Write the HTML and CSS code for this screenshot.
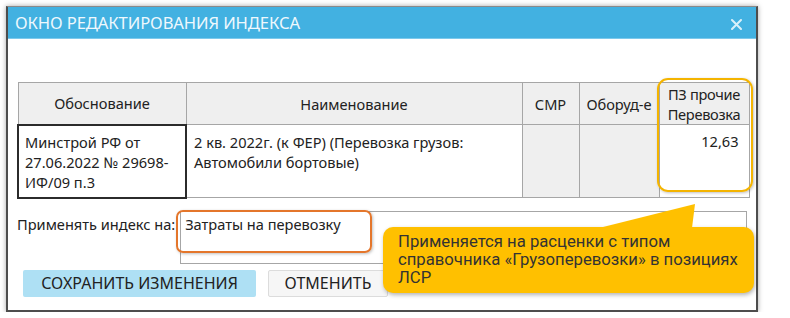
FILE: index.html
```html
<!DOCTYPE html>
<html lang="ru">
<head>
  <meta charset="UTF-8">
  <meta name="viewport" content="width=device-width, initial-scale=1">
  <title>Окно редактирования индекса</title>
  <link rel="stylesheet" href="styles.css">
</head>
<body>
<div class="dialog">
  <div class="dialog-title">
    <div>ОКНО РЕДАКТИРОВАНИЯ ИНДЕКСА</div>
    <div class="close">
      <svg width="11" height="11" viewBox="0 0 11 11">
        <path d="M1 1L10 10M10 1L1 10" stroke="#d9f0fa" stroke-width="2" stroke-linecap="round"/>
      </svg>
    </div>
  </div>
  <div class="dialog-body">
    <table class="index-table">
      <colgroup>
        <col class="col-1">
        <col class="col-2">
        <col class="col-3">
        <col class="col-4">
        <col class="col-5">
      </colgroup>
      <tr>
        <th>Обоснование</th>
        <th>Наименование</th>
        <th>СМР</th>
        <th>Оборуд-е</th>
        <th class="narrow">ПЗ прочие Перевозка</th>
      </tr>
      <tr>
        <td class="selected">Минстрой РФ от 27.06.2022 № 29698-ИФ/09 п.3</td>
        <td>2 кв. 2022г. (к ФЕР) (Перевозка грузов: Автомобили бортовые)</td>
        <td class="readonly"></td>
        <td class="readonly"></td>
        <td class="number">12,63</td>
      </tr>
    </table>
    <div class="apply-row">
      <div class="apply-label">Применять индекс на:</div>
      <div class="apply-input">Затраты на перевозку</div>
    </div>
    <div class="buttons">
      <div class="btn btn-save">СОХРАНИТЬ ИЗМЕНЕНИЯ</div>
      <div class="btn btn-cancel">ОТМЕНИТЬ</div>
    </div>
  </div>

  <div class="mark mark-column"></div>
  <div class="mark mark-input"></div>
  <div class="callout">
    <svg class="callout-tail" width="100" height="24" viewBox="0 0 100 24">
      <path d="M0 24L96 0L93 24Z" fill="#ffc000"/>
    </svg>
    Применяется на расценки с типом справочника «Грузоперевозки» в позициях ЛСР
  </div>
</div>
</body>
</html>
```

FILE: styles.css
```css
body {
  margin: 0;
  background: #ffffff;
  font-family: "Noto Sans", "Open Sans", sans-serif;
  color: #222222;
}

.dialog {
  position: relative;
  margin: 6px 0 0 6px;
  width: 752px;
  height: 306px;
  box-sizing: border-box;
  border: 2px solid #4d4d4d;
  border-top: 1px solid #8a8a8a;
  background: #ffffff;
  box-shadow: 0 0 5px rgba(0, 0, 0, 0.35);
}

.dialog-title {
  display: flex;
  justify-content: space-between;
  align-items: center;
  height: 31px;
  padding: 0 14px 0 7px;
  background: #42b1e1;
  border-bottom: 1px solid #7cc9ec;
  color: #eef8fd;
  font-size: 16.6px;
  letter-spacing: -0.1px;
}

.close {
  display: flex;
  padding-top: 3px;
}

.dialog-body {
  padding: 43px 9px 0 9px;
}

.index-table {
  width: 731px;
  border-collapse: collapse;
  table-layout: fixed;
  font-size: 14.6px;
}

.index-table .col-1 { width: 168px; }
.index-table .col-2 { width: 336px; }
.index-table .col-3 { width: 57px; }
.index-table .col-4 { width: 80px; }
.index-table .col-5 { width: 90px; }

.index-table th,
.index-table td {
  border: 1px solid #a6a6a6;
  padding: 0 4px;
  line-height: 20px;
  box-sizing: border-box;
  overflow: hidden;
}

.index-table th {
  height: 42px;
  background: #efefef;
  font-weight: normal;
  text-align: center;
}

.index-table th.narrow {
  padding: 0 2px;
  letter-spacing: -0.3px;
}

.index-table td {
  height: 73px;
  vertical-align: top;
  padding-top: 7px;
  padding-left: 7px;
}

.index-table td.selected {
  border: 2px solid #2b2b2b;
  padding-top: 6px;
  padding-left: 6px;
  padding-right: 2px;
}

.index-table td.readonly {
  background: #efefef;
}

.index-table td.number {
  text-align: right;
  padding-right: 10px;
  padding-top: 6px;
}

.apply-row {
  display: flex;
  gap: 5px;
  margin-top: 12px;
  font-size: 14.6px;
}

.apply-label {
  padding-top: 3px;
}

.apply-input {
  flex: 1;
  height: 53px;
  box-sizing: border-box;
  border: 1px solid #a6a6a6;
  padding: 2px 4px;
}

.buttons {
  display: flex;
  gap: 12px;
  margin-top: 6px;
  padding-left: 6px;
}

.btn {
  height: 27px;
  display: flex;
  align-items: center;
  justify-content: center;
  border-radius: 2px;
  font-size: 16px;
  box-sizing: border-box;
}

.btn-save {
  width: 233px;
  background: #aee0f4;
}

.btn-cancel {
  width: 120px;
  background: #f6f6f6;
  border: 1px solid #dcdcdc;
}

.mark {
  position: absolute;
  box-sizing: border-box;
  box-shadow: 1px 1px 3px rgba(0, 0, 0, 0.25);
}

.mark-column {
  left: 649px;
  top: 71px;
  width: 96px;
  height: 114px;
  border: 2px solid #f4b400;
  border-radius: 11px;
}

.mark-input {
  left: 168px;
  top: 203px;
  width: 196px;
  height: 43px;
  border: 2px solid #e4762b;
  border-radius: 7px;
}

.callout {
  position: absolute;
  left: 375px;
  top: 220px;
  width: 371px;
  height: 66px;
  box-sizing: border-box;
  padding: 6px 10px 0 15px;
  background: #ffc000;
  border-radius: 10px;
  box-shadow: 1px 2px 4px rgba(0, 0, 0, 0.3);
  font-family: Roboto, "Noto Sans", sans-serif;
  font-size: 16.7px;
  line-height: 18px;
  color: #333333;
}

.callout-tail {
  position: absolute;
  left: 216px;
  top: -23px;
}
```
